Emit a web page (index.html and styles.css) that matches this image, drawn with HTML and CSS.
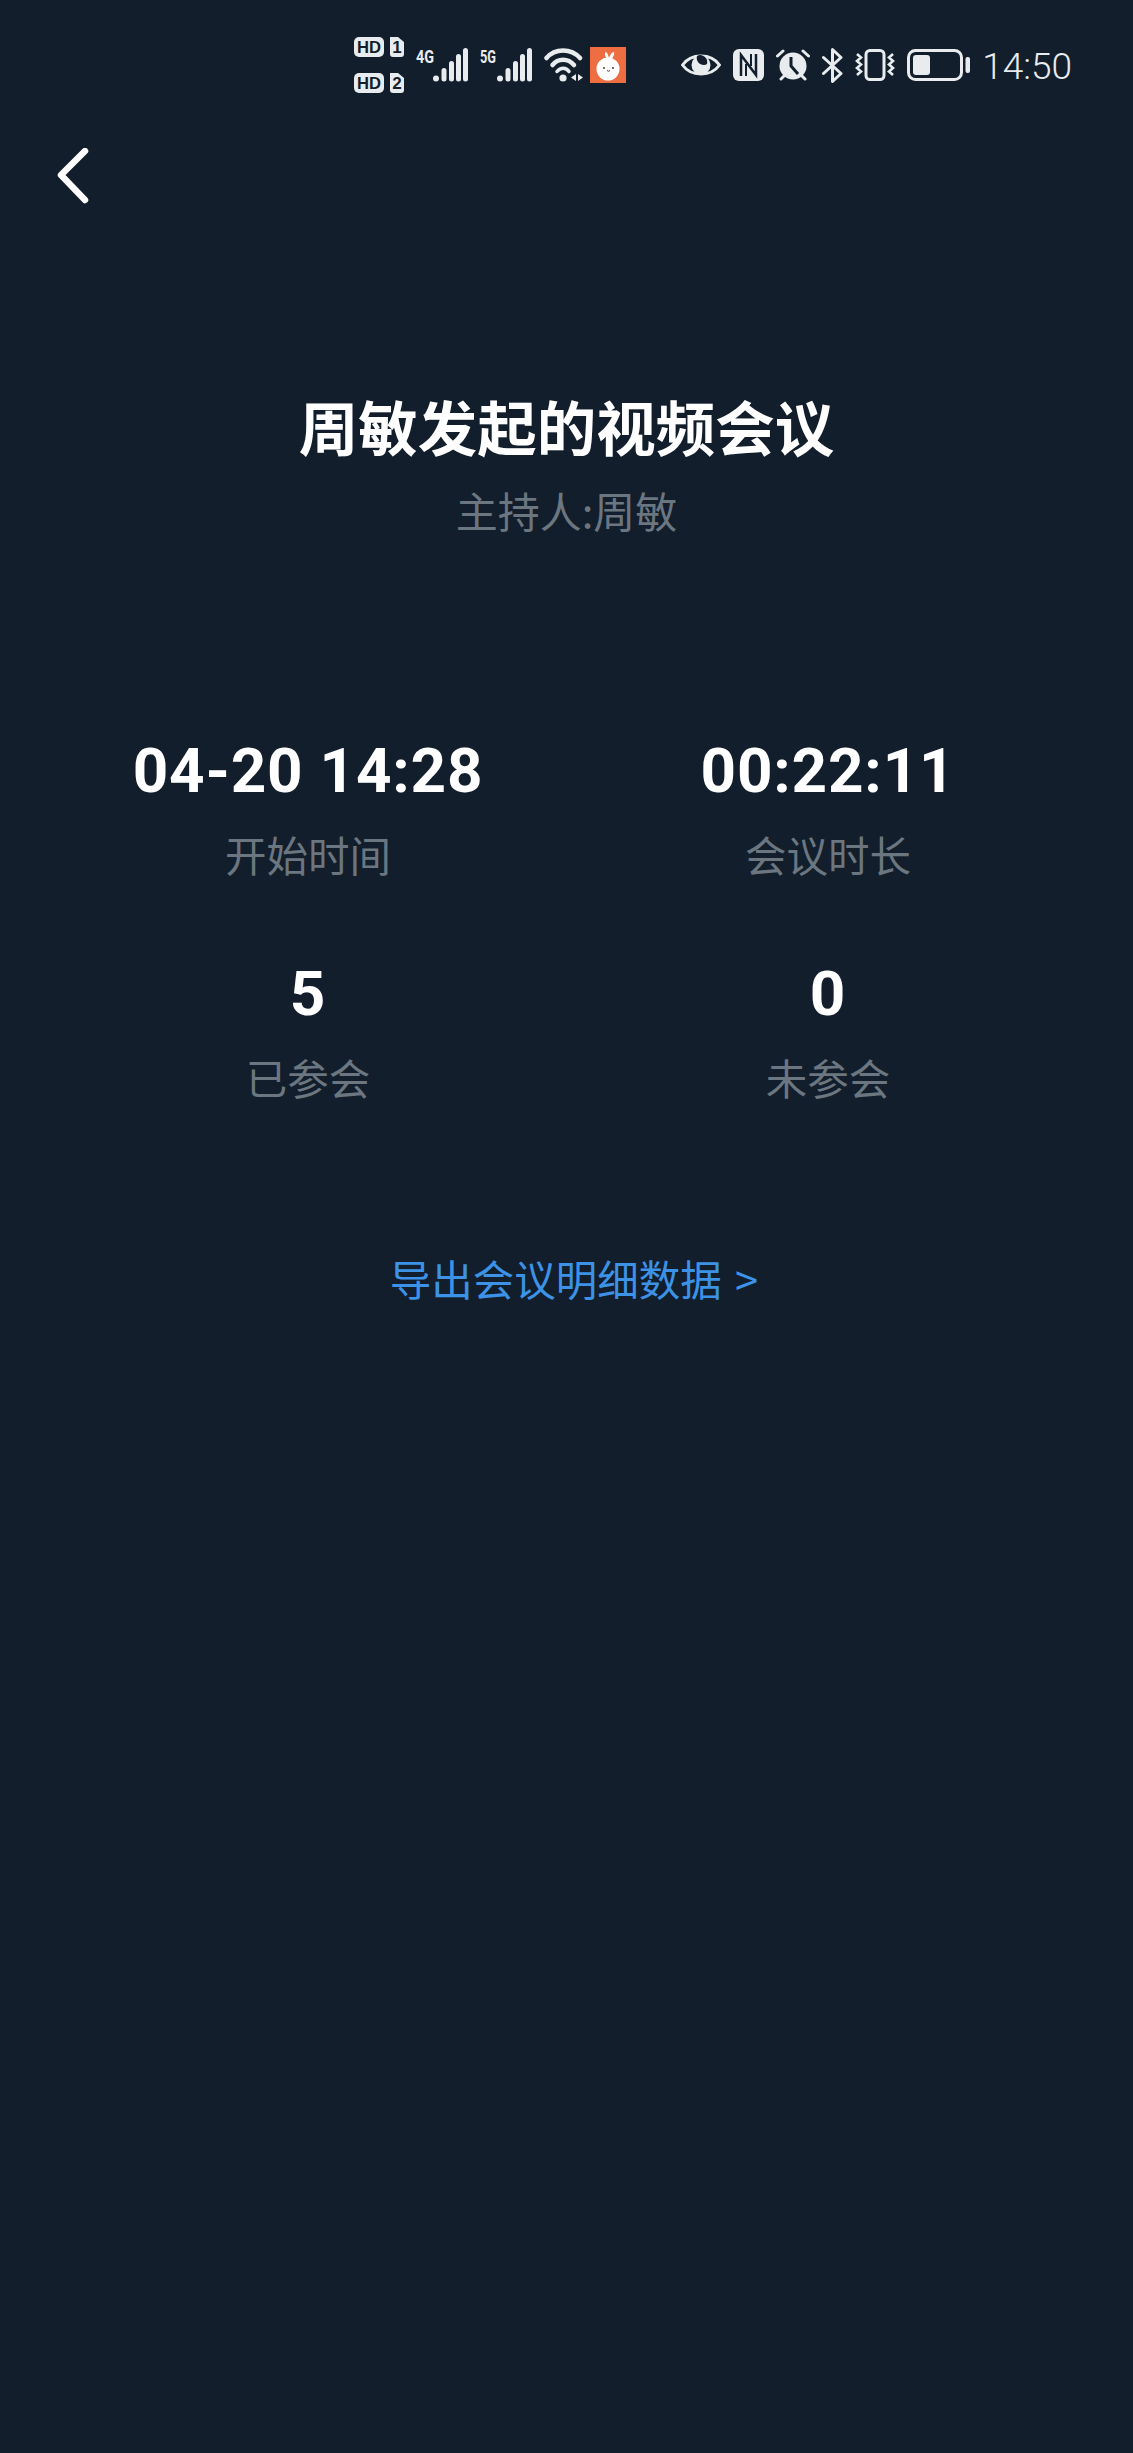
FILE: index.html
```html
<!DOCTYPE html>
<html lang="zh-CN">
<head>
<meta charset="utf-8">
<title>会议详情</title>
<link rel="stylesheet" href="styles.css">
</head>
<body>
<div class="status">
  <div class="status-left">
    <svg class="ic" width="50" height="56" viewBox="0 0 50 56">
      <rect x="0" y="0" width="30" height="20" rx="5" fill="#e8ecef"/>
      <text x="15" y="16" class="hd" textLength="24" lengthAdjust="spacingAndGlyphs">HD</text>
      <path d="M36 0h8l6 5v12a3 3 0 0 1-3 3H39a3 3 0 0 1-3-3z" fill="#e8ecef"/>
      <text x="43" y="16" class="hd">1</text>
      <rect x="0" y="36" width="30" height="20" rx="5" fill="#e8ecef"/>
      <text x="15" y="52" class="hd" textLength="24" lengthAdjust="spacingAndGlyphs">HD</text>
      <path d="M36 36h8l6 5v12a3 3 0 0 1-3 3H39a3 3 0 0 1-3-3z" fill="#e8ecef"/>
      <text x="43" y="52" class="hd">2</text>
    </svg>
    <svg class="ic" width="52" height="42" viewBox="0 -4 52 42">
      <text x="0" y="15" class="net" textLength="18" lengthAdjust="spacingAndGlyphs">4G</text>
      <g fill="#e8ecef">
        <circle cx="20" cy="30.500" r="3"/>
        <rect x="25.500" y="20" width="5" height="13.500" rx="2.500"/>
        <rect x="33" y="13" width="5" height="20.500" rx="2.500"/>
        <rect x="40" y="6" width="5" height="27.500" rx="2.500"/>
        <rect x="47" y="0" width="5" height="33.500" rx="2.500"/>
      </g>
    </svg>
    <svg class="ic" width="52" height="42" viewBox="0 -4 52 42">
      <text x="0" y="15" class="net" textLength="16" lengthAdjust="spacingAndGlyphs">5G</text>
      <g fill="#e8ecef">
        <circle cx="20" cy="30.500" r="3"/>
        <rect x="25.500" y="20" width="5" height="13.500" rx="2.500"/>
        <rect x="33" y="13" width="5" height="20.500" rx="2.500"/>
        <rect x="40" y="6" width="5" height="27.500" rx="2.500"/>
        <rect x="47" y="0" width="5" height="33.500" rx="2.500"/>
      </g>
    </svg>
    <div class="wifi-app">
      <svg class="ic" width="40" height="34" viewBox="0 0 40 34">
        <g fill="none" stroke="#e8ecef" stroke-width="4.500" stroke-linecap="round">
          <path d="M2.500 10C11 0 27 0 36 10"/>
          <path d="M8.500 17C14 10 24 10 30 17"/>
        </g>
        <path d="M13 23.500C16.500 19 22 19 25 23.500" fill="none" stroke="#e8ecef" stroke-width="3.500" stroke-linecap="round"/>
        <circle cx="19" cy="30" r="3.600" fill="#e8ecef"/>
        <path d="M32 26v7l-5-3.500zM34 26v7l5-3.500z" fill="#e8ecef"/>
      </svg>
      <svg class="ic" width="36" height="36" viewBox="0 0 36 36">
        <rect width="36" height="36" fill="#ee6e41"/>
        <path d="M17 12C15 9 14 6 16 5 18 6 18 9 19 11 20 8 22 5 24 5 25 7 23 10 21 13z" fill="#fff"/>
        <circle cx="18" cy="22" r="11.500" fill="#fff"/>
        <circle cx="14" cy="21" r="1" fill="#5a3a2a"/>
        <circle cx="23" cy="21" r="1" fill="#5a3a2a"/>
        <path d="M17 23.500q1.500 1.500 3 0" stroke="#5a3a2a" stroke-width="1" fill="none"/>
      </svg>
    </div>
  </div>
  <div class="status-right">
    <svg class="ic" width="40" height="28" viewBox="0 0 40 28">
      <path d="M1.500 14C10 2 30 2 38.500 14 30 26 10 26 1.500 14z" fill="none" stroke="#e8ecef" stroke-width="3" stroke-linejoin="round"/>
      <circle cx="20" cy="14" r="9.500" fill="#e8ecef"/>
      <path d="M16 5a7 7 0 0 0 7 9 7 7 0 0 0 3-1 7 7 0 0 0-10-8z" fill="#121e2b"/>
    </svg>
    <svg class="ic" width="31" height="32" viewBox="0 0 31 32">
      <rect width="31" height="32" rx="6" fill="#e8ecef"/>
      <path d="M8 27V6l15 20V5" fill="none" stroke="#121e2b" stroke-width="2.500"/>
      <path d="M13 15v12M18 5v12" fill="none" stroke="#121e2b" stroke-width="2"/>
    </svg>
    <svg class="ic" width="34" height="32" viewBox="0 0 34 32">
      <circle cx="17" cy="17" r="13.500" fill="#e8ecef"/>
      <path d="M15 8v9l7 8" fill="none" stroke="#121e2b" stroke-width="3"/>
      <path d="M1.500 7L7 2M32.500 7L27 2M5 30l3-3M29 30l-3-3" stroke="#e8ecef" stroke-width="3" stroke-linecap="round"/>
    </svg>
    <svg class="ic" width="21" height="35" viewBox="0 0 21 35">
      <path d="M1.500 9.500L19 25.500 10.500 33.500V1.500L19 9.500 1.500 25.500" fill="none" stroke="#e8ecef" stroke-width="3" stroke-linejoin="round" stroke-linecap="round"/>
    </svg>
    <svg class="ic" width="40" height="32" viewBox="0 0 40 32">
      <rect x="11" y="1.500" width="18" height="29" rx="4" fill="none" stroke="#e8ecef" stroke-width="3"/>
      <path d="M2 5l4 3.500-4 3.500 4 3.500-4 3.500 4 3.500-4 3.500M38 5l-4 3.500 4 3.500-4 3.500 4 3.500-4 3.500 4 3.500" fill="none" stroke="#e8ecef" stroke-width="2.600"/>
    </svg>
    <svg class="ic" width="63" height="32" viewBox="0 0 63 32">
      <rect x="1.500" y="1.500" width="53" height="29" rx="7" fill="none" stroke="#e8ecef" stroke-width="3"/>
      <rect x="6" y="6" width="17" height="20" rx="3" fill="#e8ecef"/>
      <rect x="58.500" y="8" width="4.500" height="16" rx="2" fill="#e8ecef"/>
    </svg>
    <span class="time">14:50</span>
  </div>
</div>

<header class="nav">
  <svg class="back" width="36" height="60" viewBox="0 0 36 60">
    <path d="M30 3L6 27 30 52" fill="none" stroke="#fff" stroke-width="6.500" stroke-linecap="round" stroke-linejoin="round"/>
  </svg>
</header>

<main class="content">
  <h1 class="title">周敏发起的视频会议</h1>
  <p class="host">主持人:周敏</p>

  <section class="stats">
    <div class="stat">
      <div class="value">04-20 14:28</div>
      <div class="label">开始时间</div>
    </div>
    <div class="stat">
      <div class="value">00:22:11</div>
      <div class="label">会议时长</div>
    </div>
    <div class="stat">
      <div class="value">5</div>
      <div class="label">已参会</div>
    </div>
    <div class="stat">
      <div class="value">0</div>
      <div class="label">未参会</div>
    </div>
  </section>

  <a class="export">导出会议明细数据 &gt;</a>
</main>
</body>
</html>
```
FILE: styles.css
```css
* {
  box-sizing: border-box;
}

html,
body {
  margin: 0;
  padding: 0;
}

body {
  width: 1133px;
  height: 2453px;
  overflow: hidden;
  background: #121e2b;
  color: #fff;
  font-family: Roboto, "Noto Sans CJK SC", sans-serif;
}

.status {
  display: flex;
  justify-content: flex-end;
  align-items: center;
  height: 64px;
  margin-top: 33px;
  padding-right: 61px;
  gap: 55px;
}

.status-left,
.status-right {
  display: flex;
  align-items: center;
}

.status-left {
  gap: 12px;
}

.status-right {
  gap: 12px;
}

.wifi-app {
  display: flex;
  align-items: center;
  gap: 6px;
}

.ic {
  display: block;
  flex: none;
}

.hd {
  font-family: "Liberation Sans", sans-serif;
  font-size: 17px;
  font-weight: 700;
  fill: #121e2b;
  text-anchor: middle;
}

.net {
  font-family: Roboto, sans-serif;
  font-size: 19px;
  font-weight: 700;
  fill: #e8ecef;
}

.time {
  font-size: 37px;
  font-weight: 300;
  line-height: 44px;
  padding-top: 3px;
  color: #e8ecef;
}

.nav {
  height: 60px;
  padding: 0 0 0 55px;
  margin-top: 51px;
}

.back {
  display: block;
}

.content {
  display: flex;
  flex-direction: column;
  align-items: center;
}

.title {
  margin: 177px 0 0;
  font-family: "Noto Sans CJK SC", sans-serif;
  font-size: 59.5px;
  font-weight: 700;
  line-height: 80px;
}

.host {
  margin: 15px 0 0;
  font-family: "Noto Sans CJK SC", sans-serif;
  font-size: 42px;
  line-height: 60px;
  color: #6b7680;
}

.stats {
  display: grid;
  grid-template-columns: 520px 520px;
  row-gap: 72px;
  width: 100%;
  margin-top: 191px;
  padding-left: 48px;
}

.stat {
  display: flex;
  flex-direction: column;
  align-items: center;
}

.value {
  font-size: 62px;
  font-weight: 700;
  line-height: 80px;
  letter-spacing: 0.8px;
}

.label {
  margin-top: 15px;
  font-family: "Noto Sans CJK SC", sans-serif;
  font-size: 41.5px;
  line-height: 56px;
  color: #6b7680;
}

.export {
  margin-top: 145px;
  padding-left: 15px;
  font-family: "Noto Sans CJK SC", sans-serif;
  font-size: 41.5px;
  line-height: 56px;
  color: #3c92e6;
  word-spacing: 4px;
}
```
